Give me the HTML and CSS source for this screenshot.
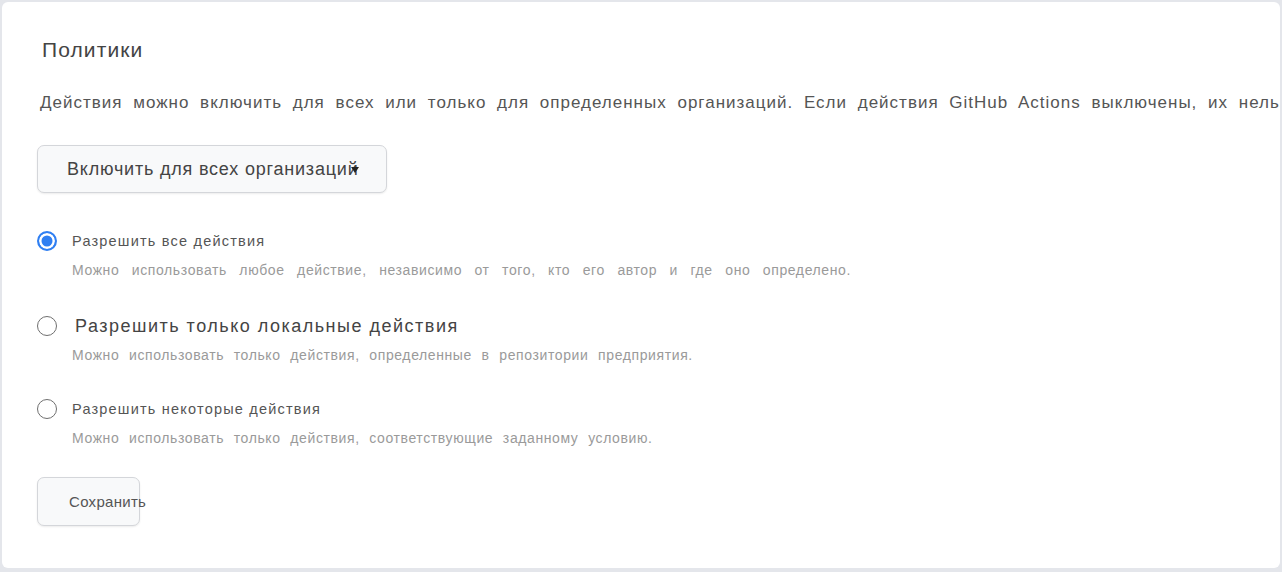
FILE: index.html
```html
<!DOCTYPE html>
<html lang="ru">
<head>
<meta charset="utf-8">
<title>Политики</title>
<link rel="stylesheet" href="styles.css">
</head>
<body>
<div class="card">
  <h2 class="title">Политики</h2>
  <p class="lead">Действия можно включить для всех или только для определенных организаций. Если действия GitHub Actions выключены, их нельзя будет использовать ни в одной организации предприятия.</p>
  <button class="select" type="button"><span class="select-text">Включить для всех организаций</span><span class="caret"></span></button>
  <div class="options">
    <div class="option">
      <label class="row"><span class="radio checked"></span><span class="label">Разрешить все действия</span></label>
      <div class="desc desc-wide">Можно использовать любое действие, независимо от того, кто его автор и где оно определено.</div>
    </div>
    <div class="option option-big">
      <label class="row"><span class="radio"></span><span class="label big">Разрешить только локальные действия</span></label>
      <div class="desc">Можно использовать только действия, определенные в репозитории предприятия.</div>
    </div>
    <div class="option">
      <label class="row"><span class="radio"></span><span class="label">Разрешить некоторые действия</span></label>
      <div class="desc">Можно использовать только действия, соответствующие заданному условию.</div>
    </div>
  </div>
  <button class="save" type="button">Сохранить</button>
</div>
</body>
</html>
```
FILE: styles.css
```css
html, body {
  margin: 0;
  padding: 0;
}
body {
  background: #e4e6eb;
  font-family: "Liberation Sans", Arial, sans-serif;
  height: 572px;
  overflow: hidden;
}
.card {
  margin: 2px;
  height: 566px;
  box-sizing: border-box;
  background: #fff;
  border-radius: 6px;
  overflow: hidden;
  padding: 36px 0 0 35px;
  display: flex;
  flex-direction: column;
  align-items: flex-start;
}
.title {
  margin: 0 0 0 5px;
  font-size: 21px;
  line-height: 24px;
  font-weight: normal;
  color: #444;
  letter-spacing: 1.1px;
}
.lead {
  margin: 29px 0 0 3px;
  font-size: 17px;
  line-height: 24px;
  color: #555;
  white-space: nowrap;
  letter-spacing: 1px;
  word-spacing: 5px;
}
.select {
  position: relative;
  margin-top: 30px;
  width: 350px;
  height: 48px;
  box-sizing: border-box;
  padding: 0 0 0 29px;
  text-align: left;
  background: #f8f9fa;
  border: 1px solid #d4d6da;
  border-radius: 7px;
  box-shadow: 0 1px 2px rgba(0,0,0,0.08);
  font-family: inherit;
  font-size: 18px;
  letter-spacing: 0.8px;
  color: #444;
  white-space: nowrap;
}
.caret {
  position: absolute;
  right: 27px;
  top: 21px;
  width: 0;
  height: 0;
  border-left: 4px solid transparent;
  border-right: 4px solid transparent;
  border-top: 6px solid #222;
}
.options {
  margin-top: 38px;
  display: flex;
  flex-direction: column;
  gap: 34px;
}
.option {
  display: flex;
  flex-direction: column;
}
.row {
  display: flex;
  align-items: center;
  gap: 15px;
  height: 20px;
}
.radio {
  width: 20px;
  height: 20px;
  box-sizing: border-box;
  border: 1.5px solid #6f6f6f;
  border-radius: 50%;
  flex: none;
}
.radio.checked {
  border: 2px solid #2f7ff2;
  background: #2f7ff2;
  box-shadow: inset 0 0 0 2.5px #fff;
}
.label {
  font-size: 14.5px;
  color: #555;
  letter-spacing: 1.2px;
}
.label.big {
  font-size: 18px;
  color: #444;
  margin-left: 3px;
  letter-spacing: 1.5px;
}
.option-big .row {
  height: 24px;
}
.option-big .desc {
  margin-top: 7px;
}
.desc {
  margin: 9px 0 0 35px;
  font-size: 14px;
  line-height: 20px;
  color: #9a9a9a;
  letter-spacing: 0.6px;
  word-spacing: 5.2px;
  white-space: nowrap;
}
.desc.desc-wide {
  word-spacing: 8px;
}
.save {
  margin-top: 29px;
  width: 103px;
  height: 49px;
  box-sizing: border-box;
  padding: 0 0 0 31px;
  text-align: left;
  background: #f8f9fa;
  border: 1px solid #d4d6da;
  border-radius: 7px;
  box-shadow: 0 1px 2px rgba(0,0,0,0.08);
  font-family: inherit;
  font-size: 15px;
  letter-spacing: 0.3px;
  color: #555;
  white-space: nowrap;
  overflow: visible;
}
```
